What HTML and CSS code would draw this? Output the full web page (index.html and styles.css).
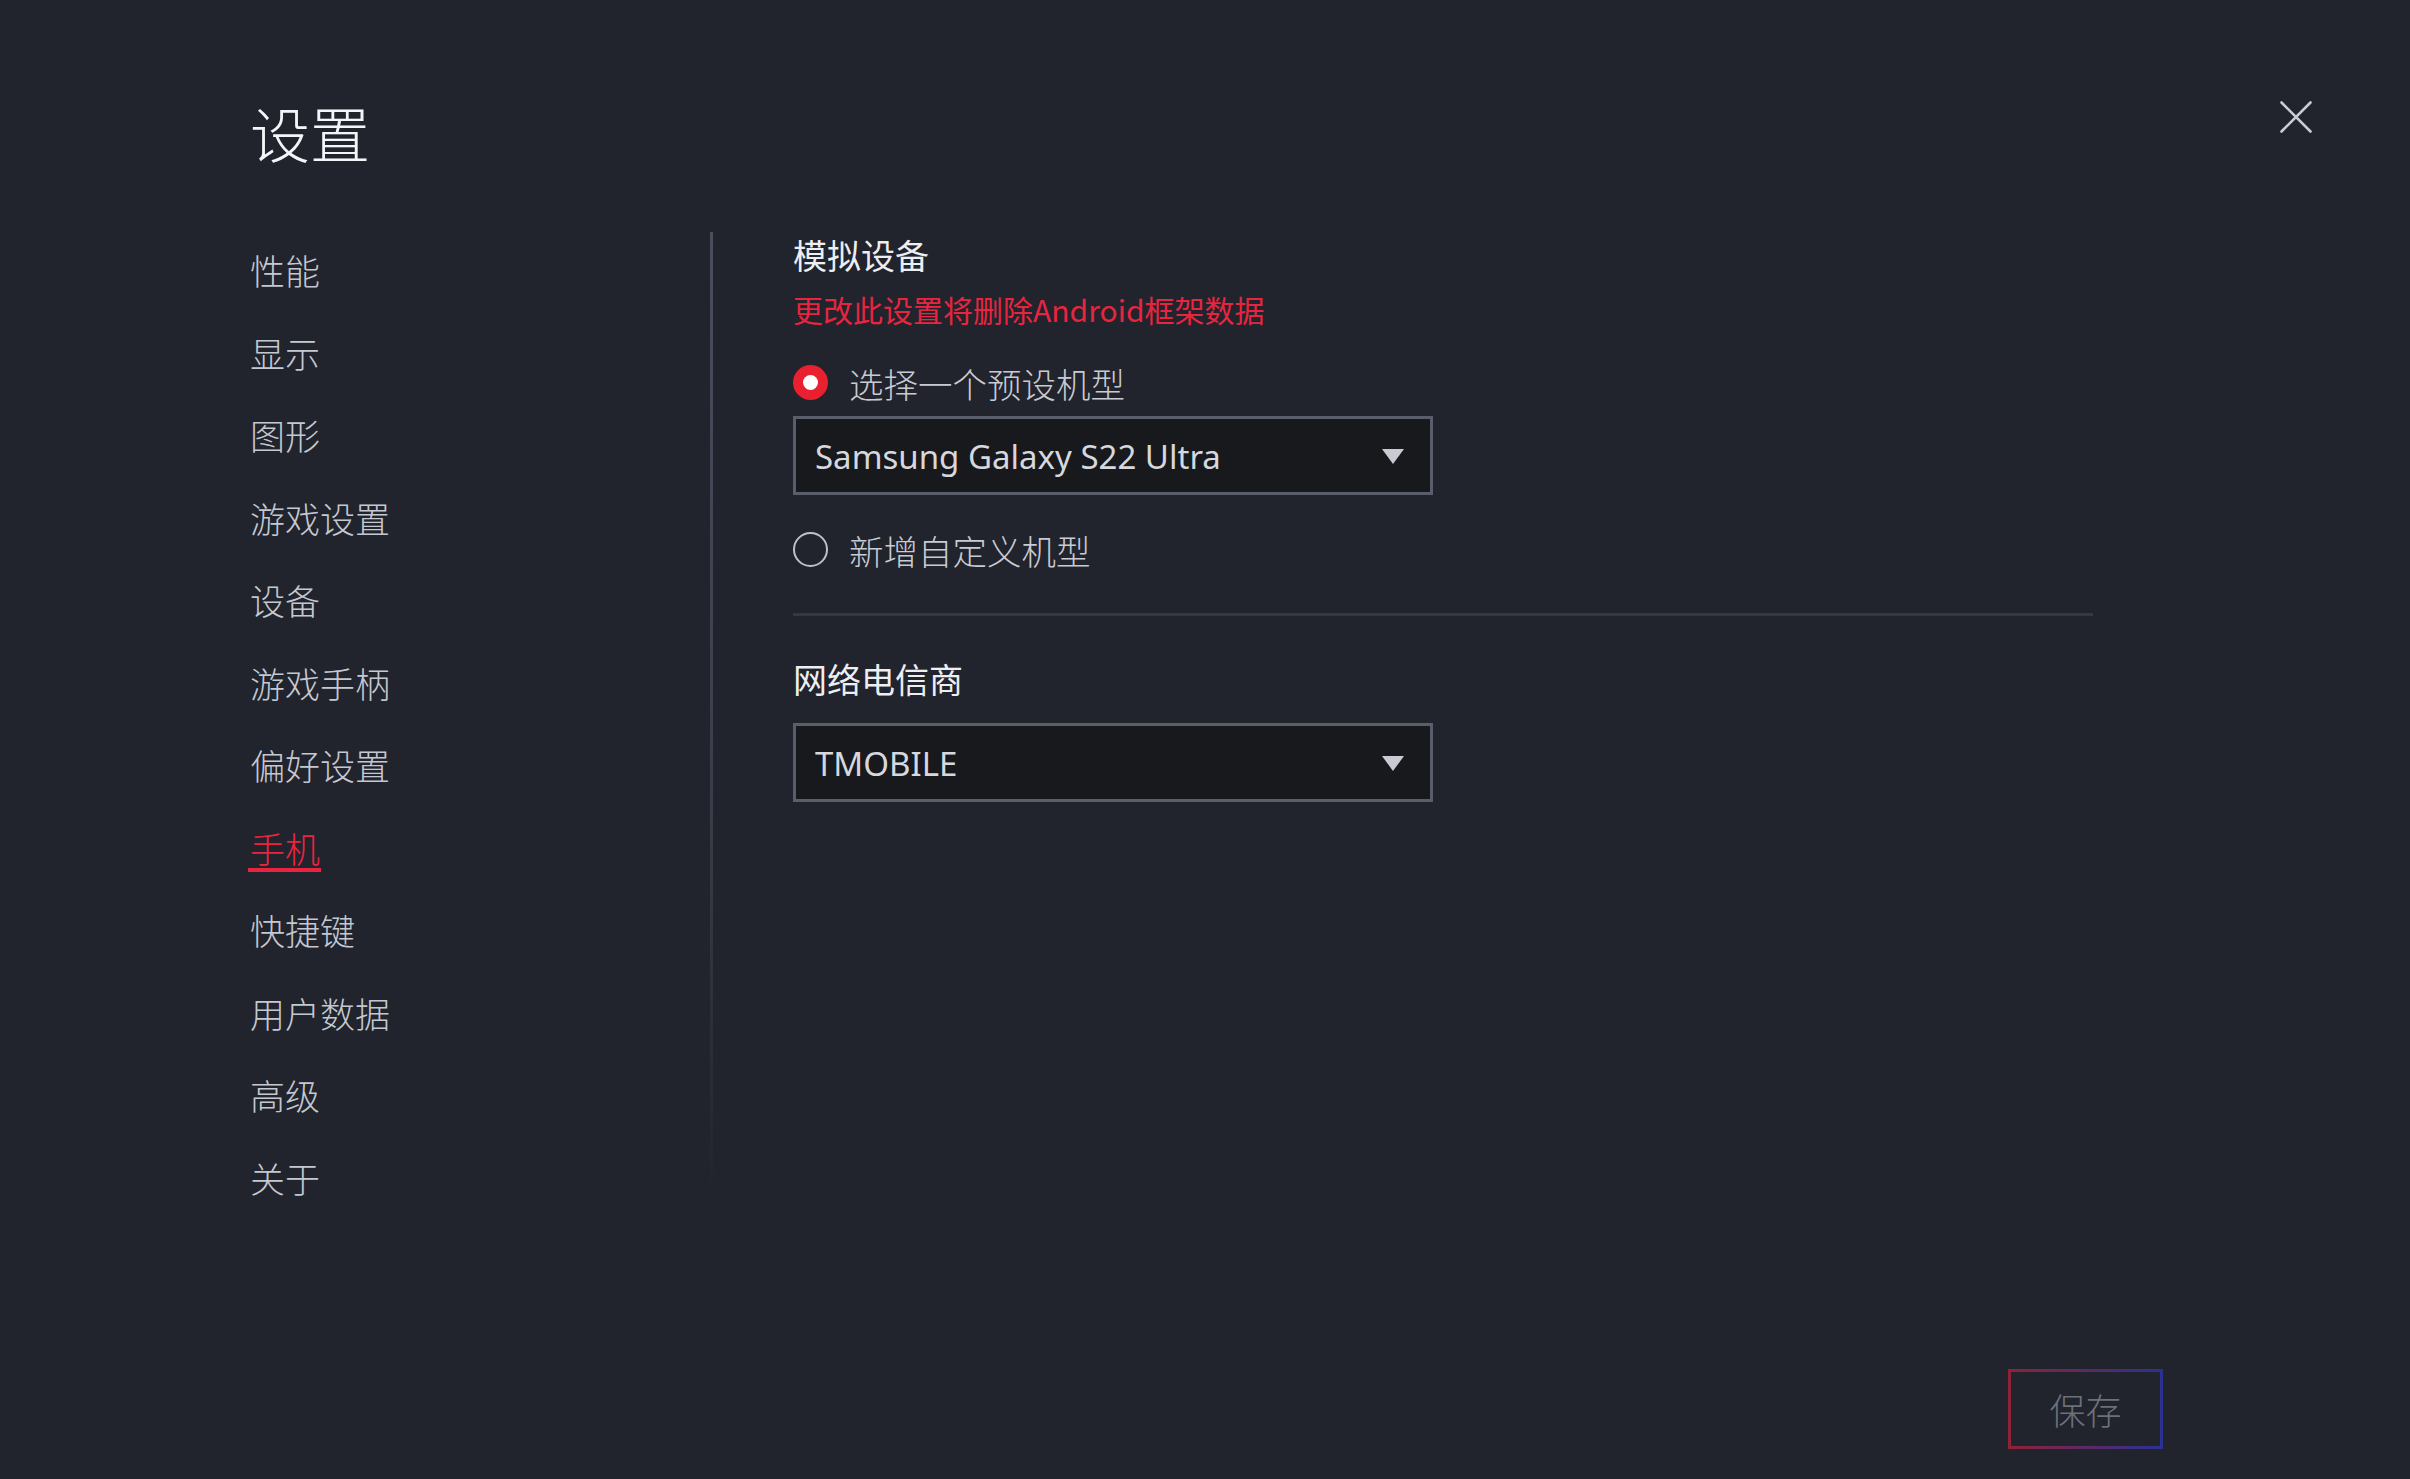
FILE: index.html
```html
<!DOCTYPE html>
<html lang="zh-CN">
<head>
<meta charset="utf-8">
<title>设置</title>
<link rel="stylesheet" href="styles.css">
</head>
<body>
<div class="app">
  <header class="header">
    <h1 class="title">设置</h1>
    <button class="close" aria-label="关闭">
      <svg width="32" height="32" viewBox="0 0 32 32"><path d="M1.5 1.5 L30.5 30.5 M30.5 1.5 L1.5 30.5" stroke="#c8ccd4" stroke-width="2.6" stroke-linecap="round" fill="none"/></svg>
    </button>
  </header>
  <main class="main">
    <nav class="sidebar">
      <div class="nav-item">性能</div>
      <div class="nav-item">显示</div>
      <div class="nav-item">图形</div>
      <div class="nav-item">游戏设置</div>
      <div class="nav-item">设备</div>
      <div class="nav-item">游戏手柄</div>
      <div class="nav-item">偏好设置</div>
      <div class="nav-item active">手机</div>
      <div class="nav-item">快捷键</div>
      <div class="nav-item">用户数据</div>
      <div class="nav-item">高级</div>
      <div class="nav-item">关于</div>
    </nav>
    <div class="divider"></div>
    <section class="content">
      <h2 class="section-title">模拟设备</h2>
      <p class="warning">更改此设置将删除Android框架数据</p>
      <div class="radio-row first">
        <span class="radio checked"></span>
        <span class="radio-label">选择一个预设机型</span>
      </div>
      <div class="select device-select">
        <span class="select-text">Samsung Galaxy S22 Ultra</span>
        <span class="arrow"></span>
      </div>
      <div class="radio-row second">
        <span class="radio"></span>
        <span class="radio-label">新增自定义机型</span>
      </div>
      <div class="separator"></div>
      <h2 class="section-title carrier-title">网络电信商</h2>
      <div class="select carrier-select">
        <span class="select-text">TMOBILE</span>
        <span class="arrow"></span>
      </div>
    </section>
  </main>
  <footer class="footer">
    <button class="save">保存</button>
  </footer>
</div>
</body>
</html>
```

FILE: styles.css
```css
* { box-sizing: border-box; }
html, body {
  margin: 0;
  padding: 0;
  background: #21232d;
}
body {
  font-family: "Noto Sans CJK SC", "Noto Sans", sans-serif;
  color: #c2c5cc;
}
.app {
  height: 1479px;
  display: flex;
  flex-direction: column;
  overflow: hidden;
}
.header {
  display: flex;
  justify-content: space-between;
  align-items: flex-start;
  padding: 101px 98px 0 250px;
}
.title {
  margin: 1px 0 0 0;
  font-size: 60px;
  line-height: 60px;
  font-weight: 300;
  color: #f4f5f8;
}
.close {
  width: 32px;
  height: 32px;
  padding: 0;
  margin: 0;
  border: 0;
  background: transparent;
  display: block;
}
.close svg { display: block; }
.main {
  flex: 1;
  min-height: 0;
  display: flex;
  align-items: flex-start;
  margin-top: 70px;
  padding-left: 250px;
}
.sidebar {
  width: 460px;
  padding-top: 20px;
  flex: none;
}
.nav-item {
  font-size: 35px;
  line-height: 35px;
  height: 35px;
  margin-bottom: 47.5px;
  font-weight: 300;
  color: #c4c8d0;
  position: relative;
  width: max-content;
}
.nav-item.active {
  color: #e8253f;
}
.nav-item.active::after {
  content: "";
  position: absolute;
  left: -2px;
  right: -1px;
  bottom: -7px;
  height: 4px;
  background: #e8253f;
}
.divider {
  flex: none;
  width: 3px;
  height: 968px;
  background: linear-gradient(180deg, #4a4d5b 0%, #3a3d49 60%, rgba(58, 61, 73, 0) 100%);
}
.content {
  flex: 1;
  padding-left: 80px;
  padding-top: 6px;
}
.section-title {
  margin: 0;
  font-size: 34px;
  line-height: 34px;
  font-weight: 400;
  color: #eceef2;
}
.warning {
  margin: 22px 0 0 0;
  font-size: 30px;
  line-height: 30px;
  color: #e8253f;
}
.radio-row {
  display: flex;
  align-items: center;
  gap: 21px;
  height: 35px;
}
.radio-row.first { margin-top: 41px; }
.radio-row.second { margin-top: 37px; }
.radio {
  flex: none;
  width: 35px;
  height: 35px;
  border-radius: 50%;
  border: 2.5px solid #bfc1c7;
  position: relative;
}
.radio.checked {
  border: 0;
  background: #e8202f;
}
.radio.checked::after {
  content: "";
  position: absolute;
  left: 10px;
  top: 10px;
  width: 15px;
  height: 15px;
  border-radius: 50%;
  background: #ffffff;
}
.radio-label {
  font-size: 34.5px;
  line-height: 34px;
  font-weight: 300;
  color: #c8cbd2;
}
.select {
  width: 640px;
  height: 79px;
  border: 3px solid #5a5e6b;
  background: #18191d;
  display: flex;
  align-items: center;
  justify-content: space-between;
  padding: 2px 26px 0 19px;
}
.device-select { margin-top: 16px; }
.carrier-select { margin-top: 27px; }
.select-text {
  font-family: "Noto Sans", "Open Sans", sans-serif;
  font-size: 33px;
  line-height: 34px;
  color: #d6d8de;
}
.arrow {
  width: 0;
  height: 0;
  border-left: 11px solid transparent;
  border-right: 11px solid transparent;
  border-top: 15px solid #c9cbd2;
}
.separator {
  width: 1300px;
  height: 3px;
  background: #353844;
  margin-top: 46px;
}
.carrier-title { margin-top: 46px; }
.footer {
  display: flex;
  justify-content: flex-end;
  padding: 0 247px 30px 0;
}
.save {
  width: 155px;
  height: 80px;
  border: 3px solid;
  border-image: linear-gradient(90deg, #8e2238, #2b3192) 1;
  background: transparent;
  font-family: "Noto Sans CJK SC", sans-serif;
  font-size: 36px;
  line-height: 36px;
  font-weight: 300;
  color: #6c7079;
  padding: 0;
}
```
